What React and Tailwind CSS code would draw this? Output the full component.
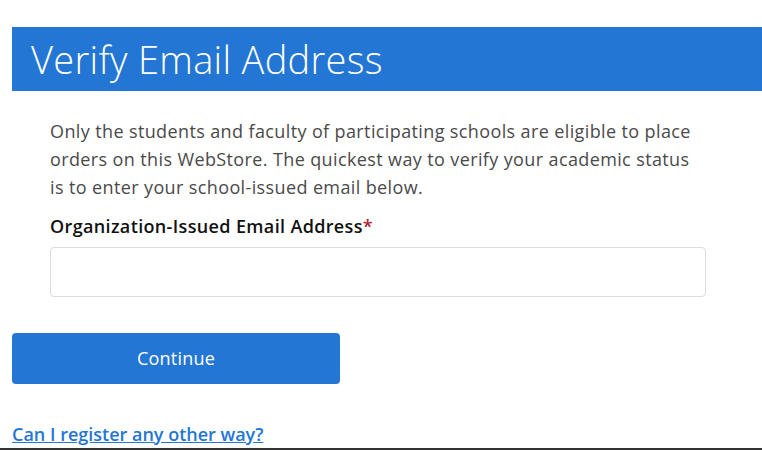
export default function App() {
  return (
    <div className="w-[762px] h-[450px] bg-white relative overflow-hidden" style={{ fontFamily: "'Open Sans', sans-serif" }}>
      <div className="pt-[27px] pl-[12px]">
        <div className="h-[64px] bg-[#2376d4] flex items-center pl-[19px]">
          <h1 className="text-white text-[38px] font-light leading-none tracking-[0.3px]">Verify Email Address</h1>
        </div>
      </div>
      <div className="pl-[50px] pr-[56px] pt-[26px]">
        <p className="text-[#4a4a4a] text-[18px] leading-[28px] whitespace-nowrap tracking-[0.38px]">
          Only the students and faculty of participating schools are eligible to place<br />
          orders on this WebStore. The quickest way to verify your academic status<br />
          is to enter your school-issued email below.
        </p>
        <div className="mt-[13px] text-[18px] leading-[24px] font-semibold text-[#111] tracking-[0.35px]">
          Organization-Issued Email Address<span className="text-[#b22234]">*</span>
        </div>
        <div className="mt-[9px] w-[656px] h-[50px] border border-[#dcdcdc] rounded-[4px]"></div>
      </div>
      <div className="pl-[12px] mt-[36px]">
        <button className="w-[328px] h-[51px] bg-[#2376d4] rounded-[4px] text-white text-[18px] tracking-[0.2px]">Continue</button>
      </div>
      <div className="pl-[12px] mt-[38px]">
        <a className="text-[#2376d4] text-[18px] font-semibold underline leading-[24px]">Can I register any other way?</a>
      </div>
      <div className="absolute left-0 right-0 bottom-0 h-[2px] bg-[#333]"></div>
    </div>
  );
}
